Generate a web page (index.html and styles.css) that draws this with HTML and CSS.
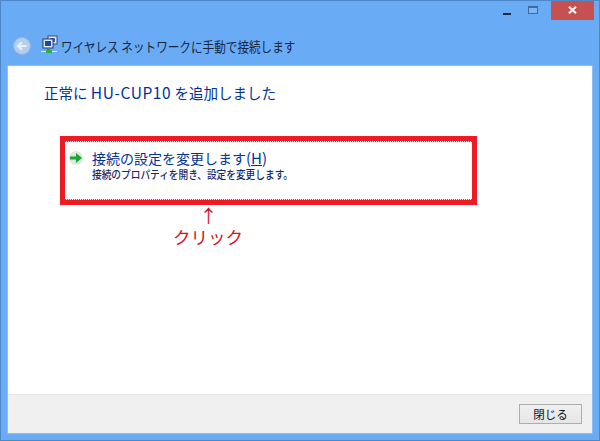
FILE: index.html
```html
<!DOCTYPE html>
<html lang="ja">
<head>
<meta charset="utf-8">
<title>ワイヤレス ネットワークに手動で接続します</title>
<link rel="stylesheet" href="styles.css">
</head>
<body>
<div class="window">
  <div class="titlebar">
    <span class="ctl ctl-min"><i class="min-glyph"></i></span>
    <span class="ctl ctl-max"><i class="max-glyph"></i></span>
    <span class="ctl-close">
      <svg width="9" height="8" viewBox="0 0 9 8"><path d="M1 0.8 L8 7.2 M8 0.8 L1 7.2" stroke="#fff" stroke-width="2" fill="none"/></svg>
    </span>
  </div>
  <div class="navbar">
    <svg class="back" width="20" height="20" viewBox="0 0 20 20">
      <circle cx="10" cy="10" r="8.5" fill="#b4cfee" stroke="#93b4dc"/>
      <path d="M14.5 10 H6.5 M10 6.2 L6 10 L10 13.8" fill="none" stroke="#e9f1fa" stroke-width="2"/>
    </svg>
    <svg class="netico" width="20" height="20" viewBox="0 0 20 20">
      <rect x="8" y="1" width="9" height="8" fill="#e6eef8" stroke="#33477a"/>
      <rect x="10" y="3" width="5" height="4" fill="#2c63c4"/>
      <rect x="3" y="4" width="10" height="9" fill="#dfe8f4" stroke="#26386e"/>
      <rect x="5" y="6" width="6" height="5" fill="#1d47a8"/>
      <rect x="7" y="13" width="3" height="3" fill="#66708c"/>
      <rect x="1" y="16" width="16" height="1" fill="#f3f7e8"/>
      <rect x="6" y="15" width="6" height="3" fill="#26b04a"/>
    </svg>
    <span class="navtitle">ワイヤレス ネットワークに手動で接続します</span>
  </div>
  <div class="panel">
    <main class="content">
      <h1 class="heading">正常に <span class="latin">HU-CUP10</span> を追加しました</h1>
      <div class="callout">
        <a class="cmdlink">
          <svg class="arrow" width="16" height="16" viewBox="0 0 16 16">
            <circle cx="8" cy="8" r="7" fill="#dfe5df"/>
            <path d="M2 6.5 H8 V3 L14 8 L8 13 V9.5 H2 Z" fill="#17a82f"/>
          </svg>
          <span class="cmdtext">
            <span class="cmdmain">接続の設定を変更します<span class="paren">(<u>H</u>)</span></span>
            <span class="cmdsub">接続のプロパティを開き、設定を変更します。</span>
          </span>
        </a>
      </div>
      <div class="note">
        <span class="note-arrow">↑</span>
        <span class="note-label">クリック</span>
      </div>
    </main>
    <footer class="footer">
      <button class="close-btn">閉じる</button>
    </footer>
  </div>
</div>
</body>
</html>
```
FILE: styles.css
```css
* { box-sizing: border-box; }
html, body { margin: 0; padding: 0; }
body {
  width: 600px;
  height: 441px;
  overflow: hidden;
  font-family: "Noto Sans CJK JP", "Noto Sans", sans-serif;
}
.window {
  width: 600px;
  height: 441px;
  background: #6aabf6;
  border: 1px solid #4f86c6;
  padding: 0 6px 6px;
  display: flex;
  flex-direction: column;
}
.titlebar {
  height: 19px;
  margin-right: -1px;
  display: flex;
  justify-content: flex-end;
  flex: none;
}
.ctl {
  display: flex;
  align-items: center;
  justify-content: center;
  width: 25px;
  height: 19px;
}
.ctl-min { margin-right: 1px; }
.ctl-max { margin-right: 6px; }
.min-glyph {
  display: block;
  width: 8px;
  height: 2px;
  margin-top: 7px;
  background: #1c2c44;
}
.max-glyph {
  display: block;
  width: 10px;
  height: 8px;
  border: 1px solid #3d6a9f;
  border-top-width: 2px;
  margin-top: -2px;
  background: #7fb5f2;
}
.ctl-close {
  width: 43px;
  height: 19px;
  background: #c75050;
  display: flex;
  align-items: center;
  justify-content: center;
}
.ctl-close svg { display: block; margin-top: -1px; }
.navbar {
  height: 45px;
  flex: none;
  display: flex;
  align-items: center;
  padding: 6px 0 0 5px;
}
.back { display: block; flex: none; }
.netico { display: block; flex: none; margin-left: 8px; margin-top: -1px; }
.navtitle {
  margin-left: 1px;
  font-size: 13.5px;
  color: #16263c;
  white-space: nowrap;
  transform: scaleX(0.86);
  transform-origin: left center;
}
.panel {
  flex: 1;
  min-height: 0;
  background: #fff;
  border: 1px solid #8fbdf0;
  display: flex;
  flex-direction: column;
}
.content {
  flex: 1;
  min-height: 0;
  padding: 15px 0 0 36px;
}
.heading {
  margin: 0;
  font-size: 14.5px;
  line-height: 22px;
  font-weight: 400;
  color: #003399;
  white-space: nowrap;
}
.latin { font-size: 15.5px; letter-spacing: 0.6px; }
.callout {
  margin: 32px 0 0 16px;
  width: 417px;
  height: 69px;
  border: 5px solid #ed1c24;
}
.cmdlink {
  display: flex;
  height: 59px;
  padding: 6px 0 0 3px;
  border-top: 1px dotted #666;
  border-bottom: 1px dotted #666;
}
.arrow { display: block; flex: none; margin-top: 2px; }
.cmdtext {
  display: flex;
  flex-direction: column;
  margin-left: 8px;
}
.cmdmain {
  font-size: 14px;
  line-height: 20px;
  color: #003399;
  white-space: nowrap;
}
.paren { font-size: 15px; line-height: 1; }
.cmdsub {
  font-size: 11px;
  line-height: 13px;
  font-weight: 500;
  color: #1a2a66;
  white-space: nowrap;
  transform: scaleX(0.88);
  transform-origin: left center;
}
.note {
  margin-left: 119px;
  width: 90px;
  display: flex;
  flex-direction: column;
  align-items: center;
  color: #d0141c;
}
.note-arrow {
  font-size: 18px;
  line-height: 20px;
  margin-left: 1px;
}
.note-label {
  font-size: 17.5px;
  line-height: 23px;
  white-space: nowrap;
}
.footer {
  height: 39px;
  flex: none;
  background: #f0f0f0;
  border-top: 1px solid #e4e4e4;
  display: flex;
  justify-content: flex-end;
  padding: 9px 10px 0 0;
}
.close-btn {
  width: 63px;
  height: 20px;
  padding: 0;
  border: 1px solid #adadad;
  background: linear-gradient(#f0f0f0, #e5e5e5);
  font-family: inherit;
  font-size: 11.5px;
  line-height: 18px;
  color: #111;
}
```
